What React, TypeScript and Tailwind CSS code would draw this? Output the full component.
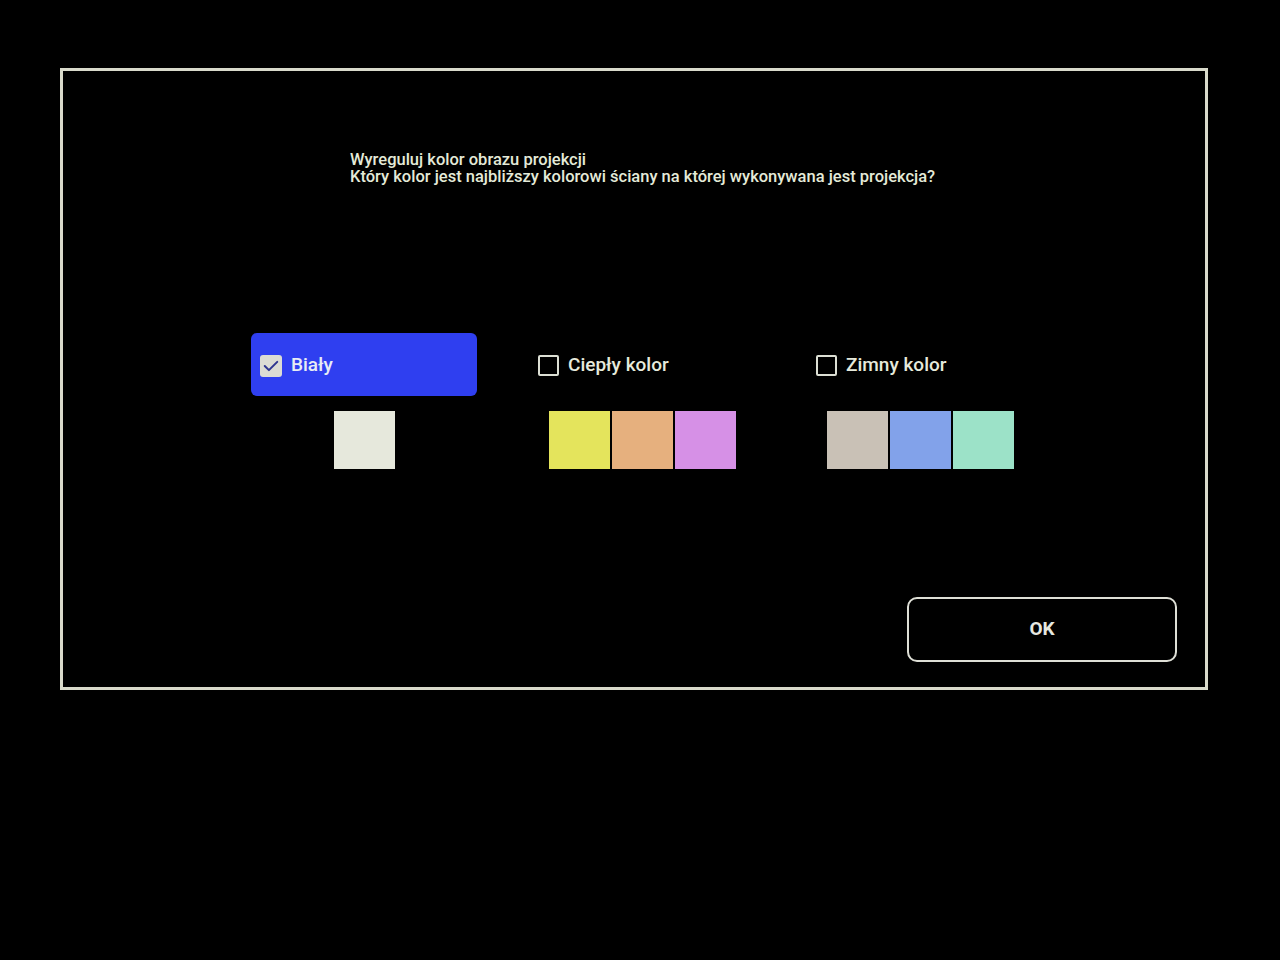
import { useState } from "react";

type Option = {
  id: string;
  label: string;
  swatches: string[];
};

const options: Option[] = [
  { id: "white", label: "Biały", swatches: ["bg-[#e6e8dc]"] },
  { id: "warm", label: "Ciepły kolor", swatches: ["bg-[#e4e45c]", "bg-[#e6b07e]", "bg-[#d690e6]"] },
  { id: "cold", label: "Zimny kolor", swatches: ["bg-[#c9c1b6]", "bg-[#82a2ea]", "bg-[#9ce2c8]"] },
];

function CheckBox({ checked }: { checked: boolean }) {
  if (checked) {
    return (
      <span className="flex h-[22px] w-[22px] items-center justify-center rounded-[3px] bg-[#dcdcd4]">
        <svg viewBox="0 0 24 24" className="h-[20px] w-[20px]" fill="none" stroke="#2e3590" strokeWidth={2.4} strokeLinecap="round" strokeLinejoin="round">
          <path d="M4.5 12l5 5L19.5 7" />
        </svg>
      </span>
    );
  }
  return <span className="block h-[21px] w-[21px] rounded-[2px] border-2 border-[#dcdfd4]" />;
}

export default function App() {
  const [selected, setSelected] = useState("white");

  return (
    <div className="h-[960px] w-full overflow-hidden bg-black pl-[60px] pt-[68px] font-['Roboto',sans-serif] text-[#e4ead8]">
      <div className="flex h-[622px] w-[1148px] flex-col border-[3px] border-[#d9dacb]">
        <div className="pl-[287px] pt-[80px] text-[16.5px] font-medium leading-[17px]">
          <p>Wyreguluj kolor obrazu projekcji</p>
          <p>Który kolor jest najbliższy kolorowi ściany na której wykonywana jest projekcja?</p>
        </div>

        <div className="mt-[148px] flex gap-[52px] pl-[188px]">
          {options.map((opt) => {
            const active = opt.id === selected;
            return (
              <div key={opt.id} className="flex w-[226px] flex-col items-center">
                <button
                  onClick={() => setSelected(opt.id)}
                  className={`flex h-[63px] w-full items-center gap-[9px] rounded-[6px] px-[9px] pt-[2px] text-left text-[19px] ${
                    active ? "bg-[#2f3ff0] text-[#e8ecf4]" : "text-[#e6eadc]"
                  }`}
                >
                  <CheckBox checked={active} />
                  <span className="font-medium">{opt.label}</span>
                </button>
                <div className="mt-[15px] flex gap-[2px]">
                  {opt.swatches.map((s) => (
                    <div key={s} className={`h-[58px] w-[61px] ${s}`} />
                  ))}
                </div>
              </div>
            );
          })}
        </div>

        <div className="mt-auto flex justify-end pb-[25px] pr-[28px]">
          <button className="flex h-[65px] w-[270px] items-center justify-center rounded-[10px] border-2 border-[#dedfd6] text-[19px] font-bold text-[#e6e8e0]">
            OK
          </button>
        </div>
      </div>
    </div>
  );
}
